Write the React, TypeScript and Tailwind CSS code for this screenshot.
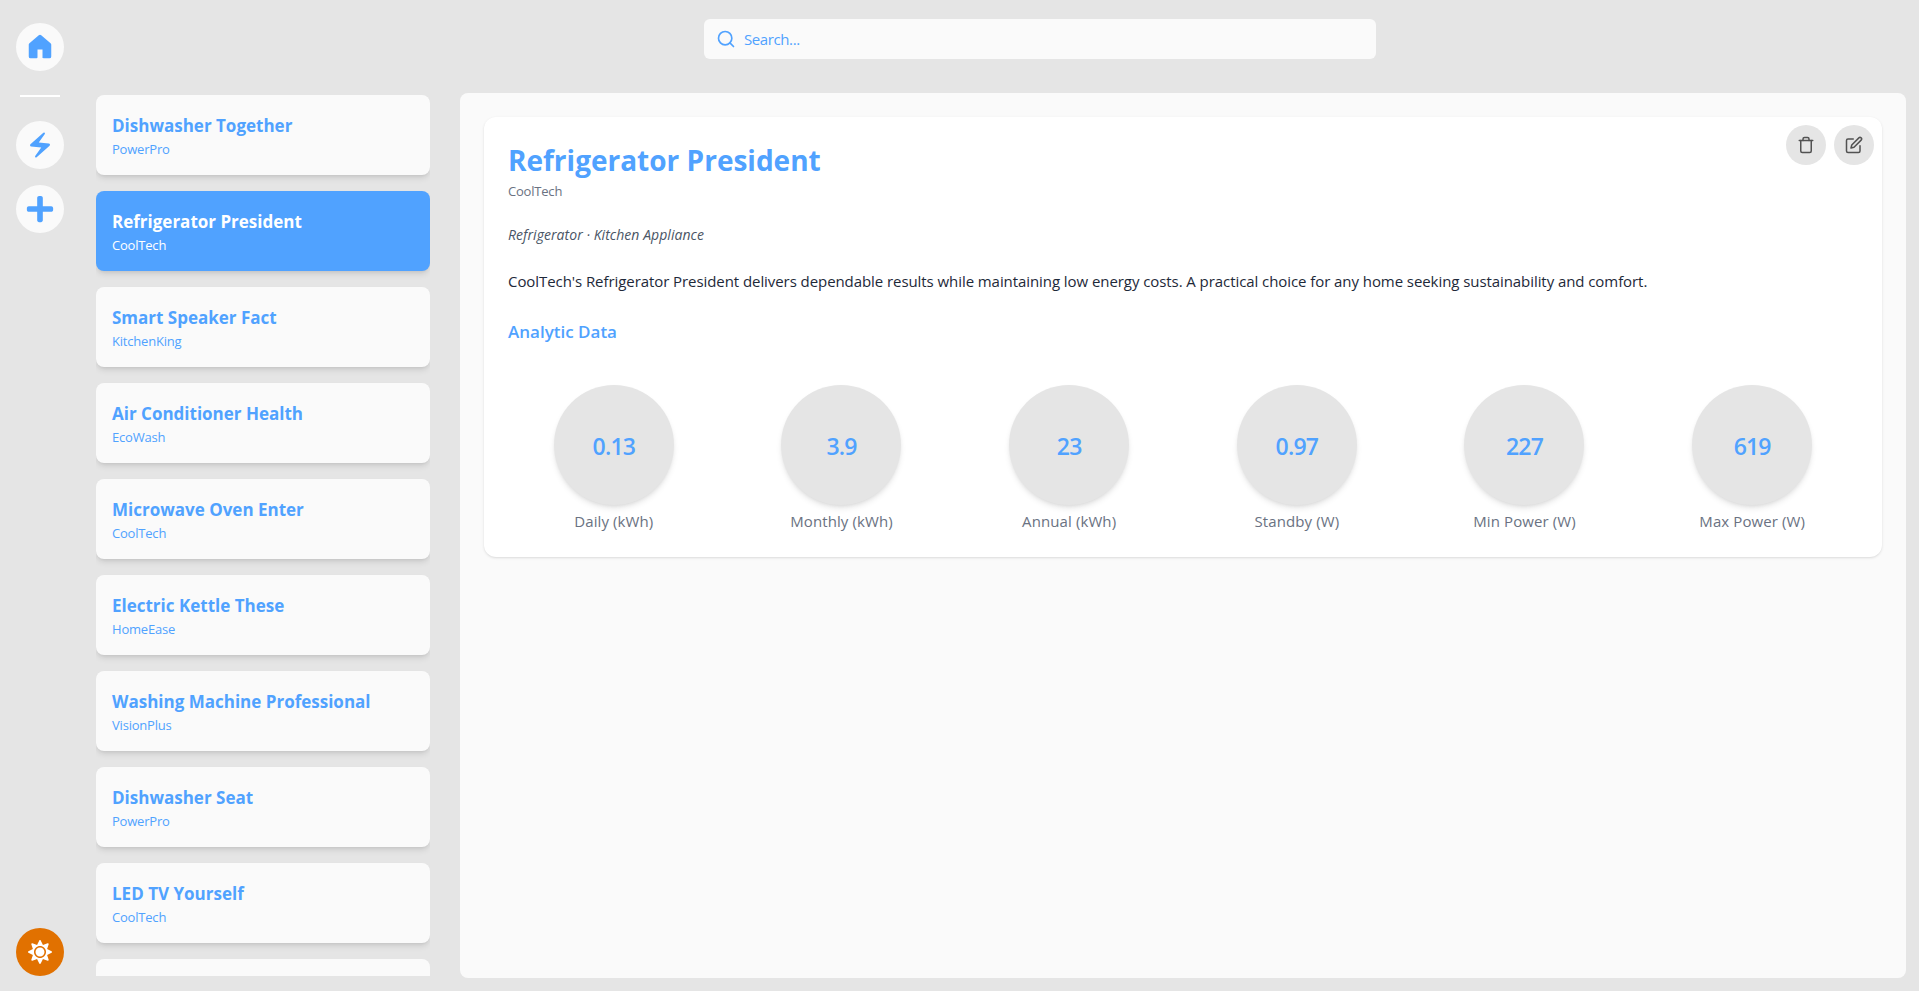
import type { ReactNode } from "react";
import { GoHomeFill } from "react-icons/go";
import { MdElectricBolt } from "react-icons/md";
import { FaPlus, FaSun } from "react-icons/fa";
import { FiEdit, FiTrash } from "react-icons/fi";
import { LuSearch } from "react-icons/lu";

type Appliance = { name: string; brand: string };

const appliances: Appliance[] = [
  { name: "Dishwasher Together", brand: "PowerPro" },
  { name: "Refrigerator President", brand: "CoolTech" },
  { name: "Smart Speaker Fact", brand: "KitchenKing" },
  { name: "Air Conditioner Health", brand: "EcoWash" },
  { name: "Microwave Oven Enter", brand: "CoolTech" },
  { name: "Electric Kettle These", brand: "HomeEase" },
  { name: "Washing Machine Professional", brand: "VisionPlus" },
  { name: "Dishwasher Seat", brand: "PowerPro" },
  { name: "LED TV Yourself", brand: "CoolTech" },
];

const metrics = [
  { value: "0.13", label: "Daily (kWh)" },
  { value: "3.9", label: "Monthly (kWh)" },
  { value: "23", label: "Annual (kWh)" },
  { value: "0.97", label: "Standby (W)" },
  { value: "227", label: "Min Power (W)" },
  { value: "619", label: "Max Power (W)" },
];

function NavButton({ label, children }: { label: string; children: ReactNode }) {
  return (
    <button
      aria-label={label}
      className="flex size-12 items-center justify-center rounded-full bg-neutral-50 text-[#50a2ff]"
    >
      {children}
    </button>
  );
}

function Sidebar() {
  return (
    <nav className="flex w-20 shrink-0 flex-col items-center pt-[23px] pb-[15px]">
      <NavButton label="Home">
        <GoHomeFill size={30} />
      </NavButton>
      <div className="my-6 h-0.5 w-10 bg-white" />
      <div className="flex flex-col gap-4">
        <NavButton label="Appliances">
          <MdElectricBolt size={30} />
        </NavButton>
        <NavButton label="Add">
          <FaPlus size={30} />
        </NavButton>
      </div>
      <button
        aria-label="Theme"
        className="mt-auto flex size-12 items-center justify-center rounded-full bg-[#e17100] text-white"
      >
        <FaSun size={24} />
      </button>
    </nav>
  );
}

function SearchBar() {
  return (
    <div className="flex h-[93px] shrink-0 justify-center pt-[19px] pl-[81px]">
      <div className="flex h-10 w-[672px] items-center gap-2 rounded-md bg-neutral-50 px-3 text-[#50a2ff]">
        <LuSearch size={20} />
        <input
          placeholder="Search..."
          className="min-w-0 flex-1 bg-transparent text-[15px] tracking-[-0.4px] outline-none placeholder:text-[#50a2ff]"
        />
      </div>
    </div>
  );
}

function ApplianceCard({ item, active }: { item: Appliance; active: boolean }) {
  return (
    <li
      className={
        active
          ? "h-20 shrink-0 rounded-lg bg-[#50a2ff] px-4 pt-[17px] text-white shadow-md"
          : "h-20 shrink-0 rounded-lg bg-neutral-50 px-4 pt-[17px] text-[#50a2ff] shadow-md"
      }
    >
      <h2 className="text-[17px] leading-7 font-bold">{item.name}</h2>
      <p className="-mt-px text-[13px] leading-5 tracking-[-0.2px]">{item.brand}</p>
    </li>
  );
}

function RoundAction({ label, children }: { label: string; children: ReactNode }) {
  return (
    <button
      aria-label={label}
      className="flex size-10 items-center justify-center rounded-full bg-neutral-200 text-neutral-600"
    >
      {children}
    </button>
  );
}

function Details() {
  return (
    <article className="relative rounded-xl bg-white p-6 shadow-sm">
      <div className="absolute top-2 right-2 flex gap-2">
        <RoundAction label="Delete">
          <FiTrash size={18} />
        </RoundAction>
        <RoundAction label="Edit">
          <FiEdit size={18} />
        </RoundAction>
      </div>
      <h1 className="pt-0.5 text-[28px] leading-[34px] font-bold text-[#50a2ff]">Refrigerator President</h1>
      <p className="mt-1 text-[13px] leading-5 tracking-[-0.2px] text-gray-500">CoolTech</p>
      <p className="mt-6 text-sm leading-5 tracking-[0.05px] text-gray-600 italic">
        Refrigerator · Kitchen Appliance
      </p>
      <p className="mt-6 text-[15px] leading-6 tracking-[-0.07px] text-gray-800">
        CoolTech's Refrigerator President delivers dependable results while maintaining low energy costs. A practical
        choice for any home seeking sustainability and comfort.
      </p>
      <h2 className="mt-[25px] text-[17px] leading-7 font-semibold text-[#50a2ff]">Analytic Data</h2>
      <div className="mt-[39px] grid grid-cols-6 gap-4">
        {metrics.map((m) => (
          <div key={m.label} className="flex flex-col items-center gap-1">
            <div className="flex size-30 items-center justify-center rounded-full bg-neutral-200 pt-0.5 text-[23px] font-semibold tracking-[-0.8px] text-[#50a2ff] shadow-md">
              {m.value}
            </div>
            <span className="text-[15px] leading-6 tracking-[0.1px] text-gray-500">{m.label}</span>
          </div>
        ))}
      </div>
    </article>
  );
}

export default function App() {
  return (
    <div className="flex h-screen overflow-hidden bg-neutral-200 font-['Open_Sans','Noto_Sans',sans-serif]">
      <Sidebar />
      <div className="flex min-w-0 flex-1 flex-col">
        <SearchBar />
        <div className="flex min-h-0 flex-1 gap-[30px] pr-[13px] pb-[13px] pl-4">
          <ul className="my-0.5 flex w-[334px] shrink-0 flex-col gap-4 overflow-hidden">
            {appliances.map((item, i) => (
              <ApplianceCard key={item.name} item={item} active={i === 1} />
            ))}
            <li className="h-20 shrink-0 rounded-lg bg-neutral-50" />
          </ul>
          <main className="min-w-0 flex-1 rounded-lg bg-neutral-50 p-6">
            <Details />
          </main>
        </div>
      </div>
    </div>
  );
}
